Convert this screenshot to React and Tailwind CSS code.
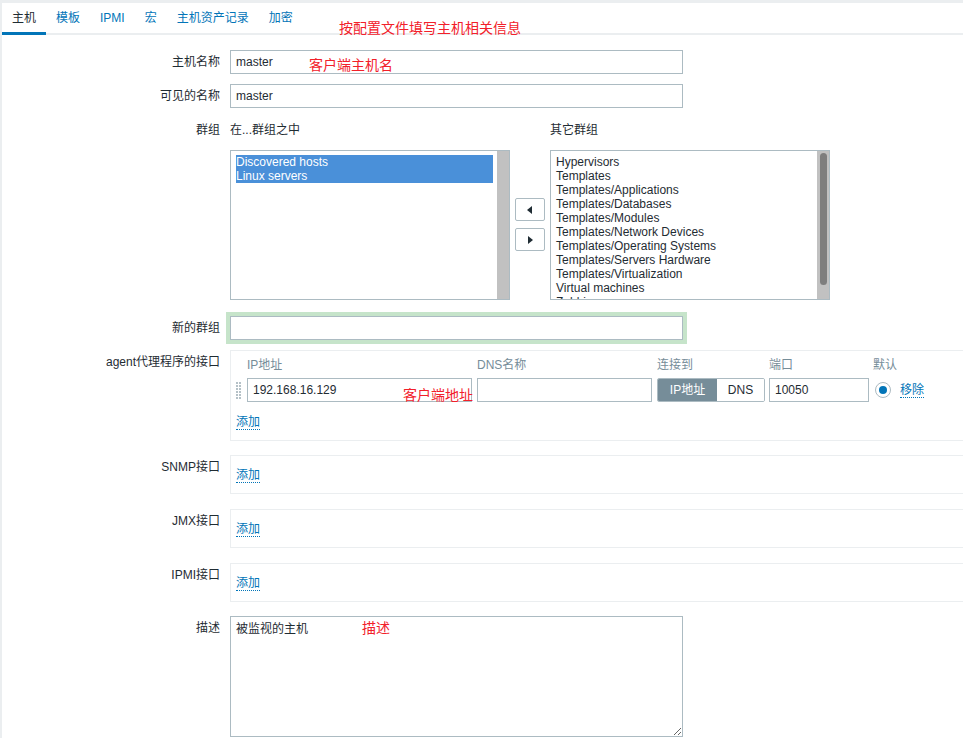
import React from "react";

const font = { fontFamily: '"Liberation Sans", Arial, "Noto Sans CJK SC", sans-serif' };

const tabs = ["主机", "模板", "IPMI", "宏", "主机资产记录", "加密"];

const otherGroups = [
  "Hypervisors",
  "Templates",
  "Templates/Applications",
  "Templates/Databases",
  "Templates/Modules",
  "Templates/Network Devices",
  "Templates/Operating Systems",
  "Templates/Servers Hardware",
  "Templates/Virtualization",
  "Virtual machines",
  "Zabbix servers",
];

function Note({ className, children }) {
  return (
    <span className={`absolute text-[14px] leading-[16px] text-[#f2202a] whitespace-nowrap pointer-events-none ${className}`}>
      {children}
    </span>
  );
}

function Label({ children }) {
  return (
    <div className="w-[228px] shrink-0 pr-[10px] text-right h-[24px] leading-[24px] text-[#1f2c33]">
      {children}
    </div>
  );
}

function AddLink() {
  return (
    <span className="text-[#0275b8] leading-[14px] border-b border-dotted border-[#0275b8]">添加</span>
  );
}

function TextInput({ value, className = "" }) {
  return (
    <input
      readOnly
      value={value}
      className={`h-[24px] border border-[#acbbc2] bg-white px-[5px] text-[12px] text-[#1f2c33] outline-none ${className}`}
      style={font}
    />
  );
}

function EmptyIface() {
  return (
    <div className="w-[800px] h-[39px] border border-[#ebeef0] flex items-center px-[5px] pt-[2px]">
      <AddLink />
    </div>
  );
}

export default function App() {
  return (
    <div className="w-[963px] h-[738px] overflow-hidden bg-[#ebeef0] pl-[2px] pt-[3px] text-[12px]" style={font}>
      <div className="relative bg-white w-[1100px] h-[800px]">
        {/* Tabs */}
        <div className="flex h-[32px] border-b-2 border-[#ebeef0]">
          {tabs.map((t, i) => (
            <div
              key={t}
              className={`px-[10px] h-[32px] leading-[30px] ${
                i === 0 ? "text-[#1f2c33] border-b-[3px] border-[#0275b8]" : "text-[#0275b8]"
              }`}
            >
              {t}
            </div>
          ))}
        </div>
        <Note className="left-[337px] top-[17px]">按配置文件填写主机相关信息</Note>

        {/* Form */}
        <div className="pt-[15px]">
          <div className="flex">
            <Label>主机名称</Label>
            <TextInput value="master" className="w-[453px]" />
          </div>
          <Note className="left-[307px] top-[54px]">客户端主机名</Note>

          <div className="flex mt-[10px]">
            <Label>可见的名称</Label>
            <TextInput value="master" className="w-[453px]" />
          </div>

          {/* Groups */}
          <div className="flex mt-[10px]">
            <Label>群组</Label>
            <div>
              <div className="flex h-[24px] items-center text-[#1f2c33]">
                <div className="w-[320px]">在...群组之中</div>
                <div>其它群组</div>
              </div>
              <div className="flex mt-[8px]">
                <div className="w-[280px] h-[150px] border border-[#acbbc2] flex">
                  <div className="flex-1 pl-[5px] pr-[4px] pt-[4px]">
                    <div className="bg-[#4a90d9] text-white leading-[14px]">
                      <div>Discovered hosts</div>
                      <div>Linux servers</div>
                    </div>
                  </div>
                  <div className="w-[12px] bg-[#c1c1c1]" />
                </div>
                <div className="w-[40px] flex flex-col items-center pt-[48px] gap-[7px]">
                  <div className="w-[30px] h-[23px] border border-[#acbbc2] rounded-[2px] bg-white flex items-center justify-center">
                    <svg width="6" height="8" viewBox="0 0 6 8"><path d="M5 0 L0 4 L5 8 Z" fill="#1f2c33" /></svg>
                  </div>
                  <div className="w-[30px] h-[23px] border border-[#acbbc2] rounded-[2px] bg-white flex items-center justify-center">
                    <svg width="6" height="8" viewBox="0 0 6 8"><path d="M1 0 L6 4 L1 8 Z" fill="#1f2c33" /></svg>
                  </div>
                </div>
                <div className="w-[280px] h-[150px] border border-[#acbbc2] flex overflow-hidden">
                  <div className="flex-1 pl-[5px] pt-[4px] text-[#1f2c33] leading-[14px] overflow-hidden">
                    {otherGroups.map((g) => (
                      <div key={g} className="whitespace-nowrap">{g}</div>
                    ))}
                  </div>
                  <div className="w-[12px] bg-[#c1c1c1] flex justify-center pt-[2px]">
                    <div className="w-[7px] h-[132px] rounded-full bg-[#7e7e7e]" />
                  </div>
                </div>
              </div>
            </div>
          </div>

          {/* New group */}
          <div className="flex mt-[16px]">
            <Label>新的群组</Label>
            <input
              readOnly
              className="w-[453px] h-[24px] border border-[#acbbc2] bg-white outline-none shadow-[0_0_0_4px_#c6e4ca]"
            />
          </div>

          {/* Agent interface */}
          <div className="flex mt-[10px]">
            <Label>agent代理程序的接口</Label>
            <div className="w-[800px] h-[91px] border border-[#ebeef0] pl-[5px] pt-[5px] relative">
              <div className="flex h-[18px] items-center text-[#768d99]">
                <div className="w-[11px]" />
                <div className="w-[230px]">IP地址</div>
                <div className="w-[180px]">DNS名称</div>
                <div className="w-[112px]">连接到</div>
                <div className="w-[104px]">端口</div>
                <div>默认</div>
              </div>
              <div className="flex items-center mt-[4px]">
                <div className="w-[11px] h-[24px] flex items-center">
                  <div className="grid grid-cols-2 gap-x-[1px] gap-y-[1px]">
                    {Array.from({ length: 12 }).map((_, i) => (
                      <div key={i} className="w-[2px] h-[2px] bg-[#b5c1c7]" />
                    ))}
                  </div>
                </div>
                <TextInput value="192.168.16.129" className="w-[225px]" />
                <TextInput value="" className="w-[175px] ml-[5px]" />
                <div className="flex ml-[5px] h-[24px] border border-[#acbbc2] rounded-[2px] overflow-hidden">
                  <div className="w-[59px] bg-[#768d99] text-white flex items-center justify-center">IP地址</div>
                  <div className="w-[47px] bg-white text-[#1f2c33] flex items-center justify-center">DNS</div>
                </div>
                <TextInput value="10050" className="w-[100px] ml-[4px]" />
                <div className="ml-[6px] w-[16px] h-[16px] rounded-full border border-[#acbbc2] flex items-center justify-center">
                  <div className="w-[8px] h-[8px] rounded-full bg-[#0275b8]" />
                </div>
                <span className="ml-[9px] text-[#0275b8] leading-[14px] border-b border-dotted border-[#0275b8]">移除</span>
              </div>
              <div className="mt-[11px] h-[18px] flex items-center">
                <AddLink />
              </div>
              <Note className="left-[172px] top-[36px]">客户端地址</Note>
            </div>
          </div>

          <div className="flex mt-[14px]">
            <Label>SNMP接口</Label>
            <EmptyIface />
          </div>
          <div className="flex mt-[15px]">
            <Label>JMX接口</Label>
            <EmptyIface />
          </div>
          <div className="flex mt-[15px]">
            <Label>IPMI接口</Label>
            <EmptyIface />
          </div>

          {/* Description */}
          <div className="flex mt-[14px]">
            <Label>描述</Label>
            <div className="relative">
              <textarea
                readOnly
                value="被监视的主机"
                className="w-[453px] h-[121px] border border-[#acbbc2] bg-white px-[5px] py-[4px] text-[12px] leading-[16px] text-[#1f2c33] outline-none block"
                style={font}
              />
              <Note className="left-[132px] top-[4px]">描述</Note>
            </div>
          </div>
        </div>
      </div>
    </div>
  );
}
